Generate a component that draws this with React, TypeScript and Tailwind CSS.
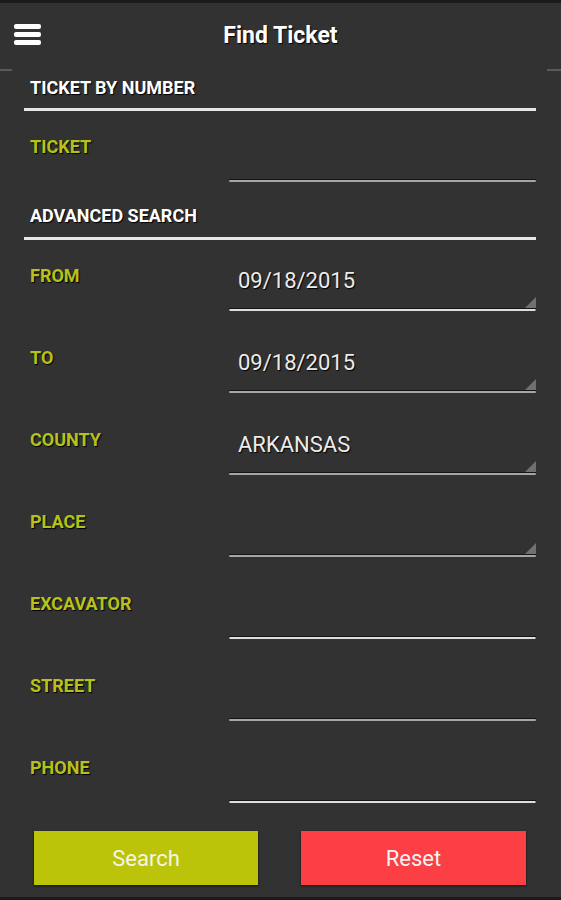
import React from "react";

type Field = { label: string; value?: string; spinner?: boolean; bright?: boolean };

const fields: Field[] = [
  { label: "FROM", value: "09/18/2015", spinner: true, bright: true },
  { label: "TO", value: "09/18/2015", spinner: true },
  { label: "COUNTY", value: "ARKANSAS", spinner: true },
  { label: "PLACE", spinner: true },
  { label: "EXCAVATOR", bright: true },
  { label: "STREET" },
  { label: "PHONE", bright: true },
];

const shadow = "[text-shadow:1px_1px_1px_#000]";

const InputLine = ({ value, spinner, bright }: Omit<Field, "label">) => (
  <div className="relative w-[307px] flex flex-col">
    {/* valor del campo */}
    <div className={`h-[26px] pl-[9px] mb-[14px] text-[22px] leading-[26px] text-[#ececec] ${shadow}`}>
      {value}
    </div>
    {spinner && (
      <svg className="absolute right-0 bottom-[3px]" width="11" height="11" viewBox="0 0 11 11">
        <polygon points="11,0 11,11 0,11" fill="#707070" />
      </svg>
    )}
    <div className="h-[1px] bg-[#151515]" />
    <div className={`h-[2px] border-x border-[#888] ${bright ? "bg-[#dedede]" : "bg-[#a6a6a6]"}`} />
  </div>
);

const Row = ({ field, first }: { field: Field; first?: boolean }) => (
  <div className={`flex items-end justify-between ${first ? "h-[71px]" : "h-[82px]"}`}>
    <div className={`pl-[6px] mb-[24px] text-[18px] leading-[22px] font-bold text-[#b6c21b] ${shadow}`}>
      {field.label}
    </div>
    <InputLine value={field.value} spinner={field.spinner} bright={field.bright} />
  </div>
);

const SectionTitle = ({ title, top }: { title: string; top: string }) => (
  <div className={`${top} border-b-[3px] border-[#e6e6e6]`}>
    <div className={`pl-[6px] text-[18px] leading-[22px] font-bold text-white ${shadow}`}>{title}</div>
  </div>
);

export default function App() {
  return (
    <div
      className="w-[561px] h-[900px] bg-[#323232] flex flex-col border-t-[3px] border-b-[3px] border-[#1a1a1a] overflow-hidden"
      style={{ fontFamily: "Roboto, 'Liberation Sans', sans-serif" }}
    >
      {/* Barra superior */}
      <div className="relative h-[66px] flex items-center justify-center">
        <div className="absolute left-[14px] top-[21px] flex flex-col gap-[3px]">
          <div className="w-[27px] h-[5px] rounded-[2px] bg-white" />
          <div className="w-[27px] h-[5px] rounded-[2px] bg-white" />
          <div className="w-[27px] h-[5px] rounded-[2px] bg-white" />
        </div>
        <div className={`text-[23px] leading-[28px] font-bold text-white ${shadow}`}>Find Ticket</div>
      </div>
      <div className="flex justify-between h-[2px]">
        <div className="w-[12px] bg-[#5a5a5a]" />
        <div className="w-[14px] bg-[#5a5a5a]" />
      </div>

      <div className="pl-[24px] pr-[25px] flex flex-col">
        <SectionTitle title="TICKET BY NUMBER" top="pt-[6px] pb-[9px]" />
        <Row field={{ label: "TICKET" }} first />
        <SectionTitle title="ADVANCED SEARCH" top="pt-[23px] pb-[10px]" />
        {fields.map((f, i) => (
          <Row key={f.label} field={f} first={i === 0} />
        ))}

        {/* Botones */}
        <div className="flex justify-between mt-[28px] px-[10px]">
          <button className="w-[224px] h-[54px] bg-[#bcc40a] text-[22px] text-[#f4f4e6] shadow-[0_1px_2px_#111]">
            Search
          </button>
          <button className="w-[225px] h-[54px] bg-[#fb3f45] text-[22px] text-[#f4f4f4] shadow-[0_1px_2px_#111]">
            Reset
          </button>
        </div>
      </div>
    </div>
  );
}
